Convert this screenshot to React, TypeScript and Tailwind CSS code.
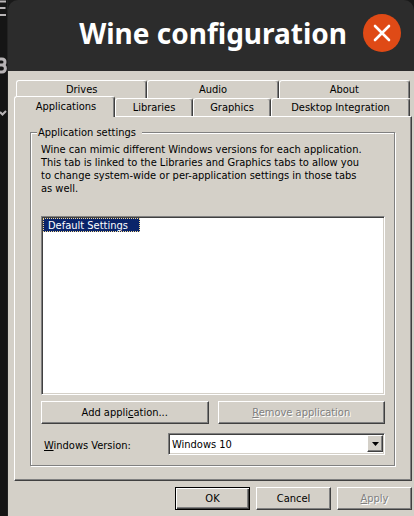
import React, { useState } from 'react';

const raised =
  'border border-t-white border-l-white border-r-[#404040] border-b-[#404040] shadow-[inset_-1px_-1px_0_#808080]';
const sunken =
  'border border-t-[#808080] border-l-[#808080] border-r-white border-b-white shadow-[inset_1px_1px_0_#404040,inset_-1px_-1px_0_#d4d0c8]';
const disabledText = 'text-[#808080] [text-shadow:1px_1px_0_#fff]';

type TabProps = { label: string; selected?: boolean; onSelect: (label: string) => void };

function Tab({ label, selected = false, onSelect }: TabProps) {
  return (
    <button
      type="button"
      role="tab"
      aria-selected={selected}
      onClick={() => onSelect(label)}
      className={`min-w-0 whitespace-nowrap rounded-t-[3px] border border-b-0 border-t-white border-l-white border-r-[#404040] bg-[#d4d0c8] text-center shadow-[inset_-1px_0_0_#808080] ${
        selected ? 'relative z-10 -mt-[2px] -mb-px h-[21px] pb-px pl-[3px]' : 'h-[18px]'
      }`}
    >
      {label}
    </button>
  );
}

function TerminalEdge() {
  return (
    <div aria-hidden="true" className="w-2 shrink-0 overflow-hidden border-r border-[#222222] bg-[#151515] text-[#b8b4b6]">
      <svg viewBox="0 0 7 120" className="h-[120px] w-[7px]" fill="none" stroke="currentColor" strokeWidth="2">
        <path d="M0 1.5H6M0 8H5.5M0 15H6" />
        <path d="M0 59H2C6 59 6 65 2 65H0M2 65C6.5 65 6.5 72 2 72H0" strokeWidth="3" />
        <path d="M0 112L2.5 114.5L6 111" />
      </svg>
    </div>
  );
}

export default function App() {
  const [tab, setTab] = useState('Applications');
  const [version, setVersion] = useState('Windows 10');
  return (
    <div className="flex min-h-screen bg-[#151515] font-['DejaVu_Sans_Condensed','DejaVu_Sans',sans-serif] text-[11px] leading-[13px] text-black">
      <TerminalEdge />
      <main className="flex min-w-0 flex-1 flex-col bg-[#d4d0c8]">
        <div className="bg-[#191919]">
          <header className="flex h-[71px] items-center justify-end gap-4 rounded-t-[10px] bg-[#2c2c2c] pr-[13px] pb-[5px]">
            <h1 className="whitespace-nowrap font-['Noto_Sans',sans-serif] text-[28px] leading-[40px] font-bold text-white">
              Wine configuration
            </h1>
            <button type="button" aria-label="Close" className="flex size-[38px] shrink-0 items-center justify-center rounded-full bg-[#df4a16]">
              <svg viewBox="0 0 18 18" className="size-[18px]" fill="none" stroke="white" strokeWidth="2.6" strokeLinecap="round">
                <path d="M2 2L16 16M16 2L2 16" />
              </svg>
            </button>
          </header>
        </div>

        <div className="pt-[9px] pr-[2px] pl-[6px]">
          <div role="tablist" aria-label="Configuration sections">
            <div className="mr-[2px] ml-[2px] grid grid-cols-3">
              {['Drives', 'Audio', 'About'].map((label) => (
                <Tab key={label} label={label} selected={tab === label} onSelect={setTab} />
              ))}
            </div>
            <div className="mr-[2px] grid grid-cols-[101fr_78fr_78fr_139fr]">
              {['Applications', 'Libraries', 'Graphics', 'Desktop Integration'].map((label) => (
                <Tab key={label} label={label} selected={tab === label} onSelect={setTab} />
              ))}
            </div>
          </div>

          <section role="tabpanel" aria-label={tab} className={`${raised} pt-[9px] pr-[16px] pb-[14px] pl-[15px]`}>
            <fieldset className="border border-[#808080] px-[10px] pb-[10px] shadow-[1px_1px_0_#fff,inset_1px_1px_0_#fff]">
              <legend className="-ml-[4px] bg-[#d4d0c8] pr-[6px] pl-px">Application settings</legend>
              <p className="h-[77px] pt-[4px] pr-[22px]">
                Wine can mimic different Windows versions for each application. This tab is linked to the Libraries and
                Graphics tabs to allow you to change system-wide or per-application settings in those tabs as well.
              </p>
              <ul role="listbox" aria-label="Applications" className={`${sunken} -mr-px h-[179px] bg-white pt-px pl-px`}>
                <li role="option" aria-selected="true" className="flex h-[14px] w-[97px] items-center bg-[#0a246a] pt-px pl-[5px] text-white outline-1 -outline-offset-1 outline-dotted outline-[#f5db95]">
                  Default Settings
                </li>
              </ul>
              <div className="mt-[6px] -mr-px grid grid-cols-2 gap-[9px]">
                <button type="button" className={`${raised} h-[23px]`}>
                  Add appli<u>c</u>ation...
                </button>
                <button type="button" disabled className={`${raised} ${disabledText} h-[23px]`}>
                  <u>R</u>emove application
                </button>
              </div>
              <div className="mt-[9px] -mr-px flex items-center">
                <label htmlFor="version" className="w-[127px] shrink-0 pt-[2px] pl-[3px]">
                  <u>W</u>indows Version:
                </label>
                <div className="relative min-w-0 flex-1">
                  <select
                    id="version"
                    value={version}
                    onChange={(e) => setVersion(e.target.value)}
                    className={`${sunken} block h-[22px] w-full appearance-none rounded-none bg-white pl-[3px] leading-[13px]`}
                  >
                    <option>Windows 10</option>
                    <option>Windows 8.1</option>
                    <option>Windows 7</option>
                  </select>
                  <span aria-hidden="true" className={`${raised} pointer-events-none absolute top-[2px] right-[2px] flex h-[17px] w-[16px] items-center justify-center bg-[#d4d0c8]`}>
                    <svg viewBox="0 0 7 4" className="h-1 w-[7px]">
                      <path d="M0 0H7L3.5 4Z" fill="black" />
                    </svg>
                  </span>
                </div>
              </div>
            </fieldset>
          </section>

          <div className="flex justify-end gap-[6px] pt-[6px]">
            <button type="button" className="h-[23px] w-[75px] border border-black shadow-[inset_1px_1px_0_#fff,inset_-1px_-1px_0_#404040,inset_-2px_-2px_0_#808080]">
              OK
            </button>
            <button type="button" className={`${raised} h-[23px] w-[75px]`}>
              Cancel
            </button>
            <button type="button" disabled className={`${raised} ${disabledText} h-[23px] w-[75px]`}>
              <u>A</u>pply
            </button>
          </div>
        </div>
      </main>
    </div>
  );
}
